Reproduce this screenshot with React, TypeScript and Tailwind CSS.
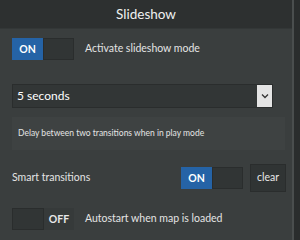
import React from 'react';

const Toggle = ({ on }: { on: boolean }) => (
  <div className="flex h-[22px] w-[62px] text-[10.5px] font-bold leading-none">
    {on ? (
      <>
        <div className="flex w-[31px] items-center justify-center bg-[#2563a6] text-white">ON</div>
        <div className="w-[31px] border border-[#2a2d2d] bg-[#313535]" />
      </>
    ) : (
      <>
        <div className="w-[32px] border border-[#2a2d2d] bg-[#313535]" />
        <div className="flex w-[30px] items-center justify-center bg-[#363a3a] text-[#e8e8e8]">OFF</div>
      </>
    )}
  </div>
);

export default function App() {
  return (
    <div className="flex h-[240px] w-[300px] bg-[#2a2d2d] text-[#e4e4e4]" style={{ fontFamily: 'Lato, "Noto Sans", sans-serif' }}>
      <div className="flex w-[294px] flex-col border-r-2 border-[#4a4e4e] bg-[#3a3e3e]">
        <div className="flex h-[29px] items-center justify-center border-b border-[#333737] bg-[#2d3030] text-[13.5px] text-[#f0f0f0]">
          Slideshow
        </div>
        <div className="flex flex-col pl-3">
          <div className="mt-[9px] flex items-center gap-[11px]">
            <Toggle on />
            <span className="text-[10.5px]">Activate slideshow mode</span>
          </div>
          <div className="mt-[24px] flex h-[24px] w-[261px] items-stretch border border-[#2a2d2d] bg-[#323636]">
            <span className="flex flex-1 items-center pl-[4px] text-[12px] text-white">5 seconds</span>
            <div className="flex w-[15px] items-center justify-center bg-[#e4e4e4]">
              <svg width="8" height="6" viewBox="0 0 8 6" fill="none" stroke="#333" strokeWidth="1.3">
                <path d="M1 1.5 L4 4.5 L7 1.5" />
              </svg>
            </div>
          </div>
          <div className="mt-[9px] flex h-[33px] w-[273px] items-center bg-[#3e4242] px-[6px] text-[8.5px]">
            Delay between two transitions when in play mode
          </div>
          <div className="mt-[14px] flex w-[274px] items-center">
            <span className="flex-1 text-[10.5px]">Smart transitions</span>
            <Toggle on />
            <button className="ml-[7px] h-[28px] w-[36px] border border-[#2a2d2d] bg-[#303434] text-[10.5px] text-[#e8e8e8]">
              clear
            </button>
          </div>
          <div className="mt-[16px] flex items-center gap-[11px]">
            <Toggle on={false} />
            <span className="text-[10.5px]">Autostart when map is loaded</span>
          </div>
        </div>
      </div>
    </div>
  );
}
